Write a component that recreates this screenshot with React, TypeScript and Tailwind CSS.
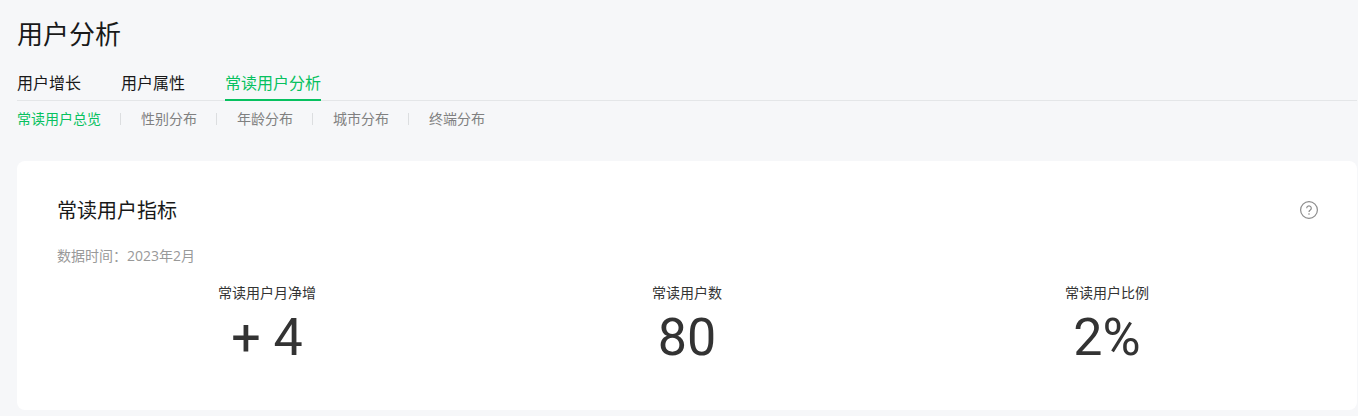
const font = { fontFamily: '"Open Sans", "Noto Sans CJK SC", sans-serif' };
const numberFont = { fontFamily: 'Roboto, sans-serif' };

const tabs = ['用户增长', '用户属性', '常读用户分析'];
const subTabs = ['常读用户总览', '性别分布', '年龄分布', '城市分布', '终端分布'];
const stats = [
  { label: '常读用户月净增', value: '+ 4' },
  { label: '常读用户数', value: '80' },
  { label: '常读用户比例', value: '2%' },
];

export default function App() {
  return (
    <div className="h-[416px] overflow-hidden bg-[#f6f7f9] pl-[17px] pr-[1px]" style={font}>
      <h1 className="pt-[16px] text-[26px] leading-[36px] font-normal text-[#191919]">用户分析</h1>

      <div className="mt-[15px] flex h-[34px] gap-[40px] border-b border-[#e4e6e8]">
        {tabs.map((tab, i) => (
          <div
            key={tab}
            className={`h-[34px] text-[16px] leading-[33px] ${i === 2 ? 'border-b-2 border-[#07c160] text-[#07c160]' : 'text-[#191919]'}`}
          >
            {tab}
          </div>
        ))}
      </div>

      <div className="mt-[10px] flex items-center">
        {subTabs.map((tab, i) => (
          <div key={tab} className="flex items-center">
            {i > 0 && <span className="ml-[19px] mr-[20px] h-[12px] w-px bg-[#dcdee0]" />}
            <span className={`text-[14px] leading-[16px] ${i === 0 ? 'text-[#07c160]' : 'text-[#808080]'}`}>{tab}</span>
          </div>
        ))}
      </div>

      <div className="mt-[34px] h-[249px] rounded-[8px] bg-white px-[40px] pt-[36px]">
        <div className="flex items-center justify-between">
          <h2 className="text-[20px] leading-[28px] font-normal text-[#191919]">常读用户指标</h2>
          <svg width="18" height="18" viewBox="0 0 18 18" fill="none" className="-mt-[2px] mr-[-1px]">
            <circle cx="9" cy="9" r="8.4" stroke="#8c8c8c" strokeWidth="1.2" />
            <path d="M6.7 7.2a2.3 2.3 0 1 1 3.6 1.9c-.8.5-1.3 1-1.3 1.9" stroke="#8c8c8c" strokeWidth="1.2" />
            <circle cx="9" cy="13" r=".8" fill="#8c8c8c" />
          </svg>
        </div>
        <p className="mt-[21px] text-[14px] leading-[20px] text-[#999999]">数据时间：2023年2月</p>
        <div className="mt-[17px] grid grid-cols-3">
          {stats.map((s) => (
            <div key={s.label} className="text-center">
              <div className="text-[14px] leading-[20px] text-[#333333]">{s.label}</div>
              <div className="mt-[4px] text-[52px] leading-[62px] font-normal text-[#333333]" style={numberFont}>
                {s.value}
              </div>
            </div>
          ))}
        </div>
      </div>
    </div>
  );
}
